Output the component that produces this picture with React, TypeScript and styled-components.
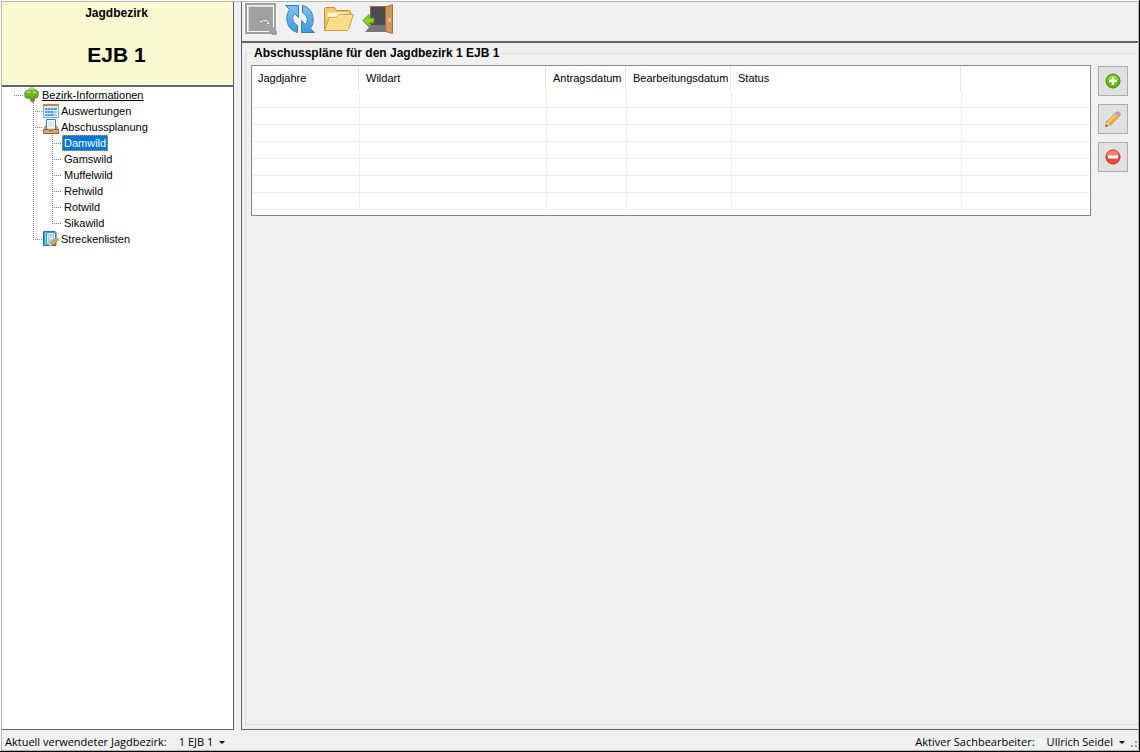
import React from "react";
import styled, { createGlobalStyle, css } from "styled-components";

const GlobalStyle = createGlobalStyle`
  *, *::before, *::after { box-sizing: border-box; }
  body { margin: 0; background: #fff; color: #000; font: 11px/16px "Liberation Sans", Arial, sans-serif; }
  button { font: inherit; color: inherit; border: 0; padding: 0; background: none; cursor: default; }
`;

const dotsAcross = "repeating-linear-gradient(90deg, #808080 0 1px, transparent 1px 2px)";
const dotsDown = "repeating-linear-gradient(180deg, #808080 0 1px, transparent 1px 2px)";

const Window = styled.div`
  display: flex;
  flex-direction: column;
  min-height: 100vh;
  padding: 1px 0 0 1px;
  background: #fff;
  border-right: 1px solid #000;
  border-bottom: 1px solid #000;
`;
const Frame = styled.div`
  flex: 1;
  display: flex;
  flex-direction: column;
  background: #f0f0f0;
  border: 1px solid #b4b4b4;
`;
const Body = styled.div`
  flex: 1;
  display: flex;
  gap: 7px;
`;
const Sidebar = styled.aside`
  flex: 0 0 232px;
  display: flex;
  flex-direction: column;
  background: #fff;
  border-right: 1px solid #646464;
  border-bottom: 1px solid #646464;
`;
const District = styled.header`
  height: 85px;
  padding: 3px 2px 0 0;
  background: #fafad2;
  border-bottom: 2px solid #646464;
  text-align: center;
  font-weight: bold;
`;
const DistrictLabel = styled.div`
  font-size: 12px;
`;
const DistrictName = styled.div`
  padding-top: 20px;
  font-size: 21px;
  line-height: 28px;
`;

const Tree = styled.ul`
  list-style: none;
  margin: 0;
  padding: 0 0 0 12px;
`;
const Branch = styled.ul`
  list-style: none;
  margin: 0 0 0 9px;
  padding: 0;
`;
const RootNode = styled.li`
  padding-left: 10px;
  background: ${dotsAcross} 0 8px / 10px 1px no-repeat;
`;
const Node = styled.li<{ $last?: boolean }>`
  padding-left: 10px;
  background:
    ${dotsDown} 0 0 / 1px ${(p) => (p.$last ? "9px" : "100%")} no-repeat,
    ${dotsAcross} 0 8px / 10px 1px no-repeat;
`;
const NodeRow = styled.div`
  display: flex;
  align-items: center;
  height: 16px;
`;
const NodeLabel = styled.button<{ $selected?: boolean; $underlined?: boolean }>`
  height: 16px;
  padding: 0 2px;
  line-height: 16px;
  white-space: nowrap;
  ${(p) => p.$underlined && css`text-decoration: underline;`}
  ${(p) =>
    p.$selected &&
    css`
      background: #0078d7;
      color: #fff;
      outline: 1px dotted #ff8728;
      outline-offset: -1px;
    `}
`;

const Main = styled.main`
  flex: 1;
  min-width: 0;
  display: flex;
  flex-direction: column;
  border-left: 1px solid #646464;
  border-bottom: 1px solid #646464;
`;
const Toolbar = styled.div`
  display: flex;
  gap: 7px;
  height: 41px;
  padding: 1px 3px 0;
  border-bottom: 2px solid #646464;
`;
const ToolButton = styled.button`
  width: 32px;
  height: 32px;
  svg {
    display: block;
    filter: drop-shadow(0 0 1px #fff);
  }
`;
const Content = styled.div`
  flex: 1;
  display: flex;
  padding: 2px 0 4px 3px;
`;
const Group = styled.fieldset`
  flex: 1;
  min-width: 0;
  margin: 0;
  padding: 4px 10px 0 5px;
  border: 1px solid #dcdcdc;
  border-right: 0;
`;
const GroupTitle = styled.legend`
  padding: 0 2px;
  margin-left: 1px;
  font-size: 12px;
  font-weight: bold;
`;
const GroupRow = styled.div`
  display: flex;
  align-items: flex-start;
  gap: 7px;
`;
const ListBox = styled.div`
  flex: 1;
  min-width: 0;
  height: 151px;
  overflow: hidden;
  background: #fff;
  border: 1px solid #828790;
`;
const List = styled.table`
  width: 100%;
  table-layout: fixed;
  border-collapse: separate;
  border-spacing: 0;
`;
const HeadCell = styled.th`
  height: 25px;
  padding: 0 1px 0 0;
  font-weight: normal;
  text-align: left;
  white-space: nowrap;
`;
const HeadText = styled.div<{ $open?: boolean }>`
  height: 25px;
  padding-left: 6px;
  line-height: 24px;
  border-right: 1px solid ${(p) => (p.$open ? "transparent" : "#e5e5e5")};
`;
const Cell = styled.td<{ $open?: boolean }>`
  height: 17px;
  padding: 0;
  border-bottom: 1px solid #f0f0f0;
  border-right: 1px solid ${(p) => (p.$open ? "transparent" : "#f0f0f0")};
`;
const Actions = styled.div`
  display: flex;
  flex-direction: column;
  gap: 8px;
  padding-top: 1px;
`;
const ActionButton = styled.button`
  display: grid;
  place-items: center;
  width: 30px;
  height: 30px;
  background: #e1e1e1;
  border: 1px solid #adadad;
`;

const StatusBar = styled.footer`
  display: flex;
  justify-content: space-between;
  height: 20px;
  padding: 2px 0 0 3px;
  font: 11px/20px "Open Sans", "Noto Sans", sans-serif;
`;
const StatusGroup = styled.div`
  display: flex;
  gap: 12px;
`;
const StatusMenu = styled.button`
  display: flex;
  align-items: center;
  gap: 6px;
  height: 20px;
`;
const Arrow = styled.span`
  border: 3px solid transparent;
  border-top-color: #000;
  border-bottom: 0;
`;
const Grip = styled.svg`
  align-self: flex-end;
  margin-left: -9px;
`;

const TreeIcon = () => (
  <svg width="16" height="16" viewBox="0 0 16 16" aria-hidden="true">
    <path d="M7 9h3l1 5-2 2-3-2z" fill="#a8743c" />
    <path d="M4 3.500C5 .500 10 0 11 3c3 0 4 3 3 4 1 3-1 5-4 4-2 2-4 1-5 0-3 1-5-1-4-3C0 5 2 3 4 3.500z" fill="#6cb829" stroke="#3f8a17" strokeWidth=".8" />
    <path d="M5 3c1-2 4-2 5 0M3 6c1-2 3-1 3 0M9 6c1-1 3-1 3 0" fill="none" stroke="#b5e36c" strokeWidth="1.300" />
    <path d="M4 9c1 1 2 1 3 0M9 10c1 0 3 0 3-2" fill="none" stroke="#418e18" />
  </svg>
);
const CalendarIcon = () => (
  <svg width="16" height="16" viewBox="0 0 16 16" aria-hidden="true">
    <path d="M.5 1.500h15v13H.5z" fill="#dff0ff" stroke="#6faee0" />
    <path d="M0 1h16v2H0z" fill="#de7750" />
    <path d="M2 5h12v2H2zM2 8h9v2H2zM2 11h9v2H2z" fill="#4a9be0" />
    <path d="M11 8h3v2h-3zM11 11h3v2h-3z" fill="#9ccdf6" />
    <path d="M4.500 5v8M7.500 5v8M10.500 5v8" stroke="#b9dcf8" strokeWidth=".6" />
  </svg>
);
const TrayIcon = () => (
  <svg width="16" height="16" viewBox="0 0 16 16" aria-hidden="true">
    <path d="M3.500.5h9V11h-9z" fill="#f5faff" stroke="#3d7fc0" />
    <path d="M5 3h6M5 5h6M5 7h6" stroke="#c4dcf2" />
    <path d="M1 10l1-3h1v3h10V7h1l1 3v4H1z" fill="#e4ba7d" stroke="#a87a42" strokeWidth=".6" />
    <path d="M.5 10.500H5l1 1h4l1-1h4.500v4H.5z" fill="#d8ab6c" stroke="#8a6034" />
  </svg>
);
const NotebookIcon = () => (
  <svg width="16" height="16" viewBox="0 0 16 16" aria-hidden="true">
    <path d="M.5.5H12l1 1v13H.5z" fill="#3a9be0" stroke="#2570b0" />
    <path d="M4.500 2.500h7v10h-7z" fill="#9fd2f7" stroke="#e4f4ff" />
    <path d="M6 5.500h4M6 7.500h4" stroke="#fff" />
    <path d="M2.500 1v13" stroke="#8acaf6" />
    <path d="M6 15l1-3 6-5 2.500 2L9 14z" fill="#f4a83a" stroke="#b6742b" strokeWidth=".7" />
    <path d="M12.500 7l1.500-1 2 2-1 1.500z" fill="#d693b7" />
    <path d="M6 15l1-3 2 2z" fill="#f5dfb9" />
  </svg>
);
const PreviewIcon = () => (
  <svg width="32" height="32" viewBox="0 0 32 32" aria-hidden="true">
    <path d="M1 1h29v29H1z" fill="#f7f7f7" stroke="#a0a0a0" strokeWidth="2" />
    <path d="M3 3h25v21l4 4v4h-5l-3-3H3z" fill="#a0a0a0" />
    <path d="M3.500 29V3.500H28" fill="none" stroke="#d8d8d8" />
    <path d="M15 18.500h2M18 17.500h4M22 18.500h1M23.500 19v2M22 20.500h1" stroke="#f4f4f4" />
    <path d="M2 28.500h22" stroke="#f7f7f7" />
  </svg>
);
const RefreshIcon = () => (
  <svg width="32" height="32" viewBox="0 0 32 32" aria-hidden="true">
    <defs>
      <linearGradient id="blue" x1="0" y1="0" x2="0" y2="1">
        <stop offset="0" stopColor="#7fc3ee" />
        <stop offset="1" stopColor="#3e9adc" />
      </linearGradient>
    </defs>
    <g fill="url(#blue)" stroke="#2f7fbd" strokeLinejoin="round">
      <path d="M1.500 2.500h13v12l-4-4c-3 4-2 9 3 12v7C3 27 0 15 5.500 6.500z" />
      <path d="M30.500 29.500h-13v-12l4 4c3-4 2-9-3-12v-7C29 5 32 17 26.500 25.500z" />
    </g>
  </svg>
);
const FolderIcon = () => (
  <svg width="32" height="32" viewBox="0 0 32 32" aria-hidden="true">
    <path d="M1.500 27V5.500l1-1h9l2 3h13l1 1V14L24 27z" fill="#f0c76c" stroke="#c68b2f" />
    <path d="M4.500 9.500h20V14h-20z" fill="#fff3cd" />
    <path d="M1.500 27.500l5-13h7l3-3H30.500l-5 15-1 1z" fill="#fbdc87" stroke="#d19a3e" strokeLinejoin="round" />
    <path d="M3.500 26l4-10.500H14l3-3h12" fill="none" stroke="#fff0b8" />
  </svg>
);
const ExitIcon = () => (
  <svg width="32" height="32" viewBox="0 0 32 32" aria-hidden="true">
    <path d="M8 3h18v25H8z" fill="#8a6a48" />
    <path d="M9 4h15v24H9z" fill="#4c4c50" />
    <path d="M9 22h15v7H3z" fill="#77777a" />
    <path d="M23.500 4l7-2.500v29l-7-2z" fill="#cf9660" stroke="#a66c35" />
    <path d="M27.500 15v4" stroke="#f7da85" strokeWidth="2" />
    <path d="M1 17.500l6-6V15h5v5H7v4z" fill="#8dd321" stroke="#4f910d" strokeLinejoin="round" />
  </svg>
);
const AddIcon = () => (
  <svg width="16" height="16" viewBox="0 0 16 16" aria-hidden="true">
    <circle cx="8" cy="8" r="7" fill="#62b900" stroke="#3f8612" />
    <path d="M2.500 7a5.500 5 0 0 1 11 0" fill="#8bd33c" />
    <path d="M8 4v8M4 8h8" stroke="#fff" strokeWidth="2.500" />
  </svg>
);
const PencilIcon = () => (
  <svg width="16" height="16" viewBox="0 0 16 16" aria-hidden="true">
    <path d="M.5 15.500l1.500-5 8.500-8.500 3.500 3.500-8.500 8.500z" fill="#f9ad38" stroke="#b87424" strokeWidth=".8" />
    <path d="M3 11.500l8-8" stroke="#ffda83" strokeWidth="1.500" />
    <path d="M.5 15.500l1.500-5 3.500 3.500z" fill="#f5ddb3" stroke="#b99363" strokeWidth=".6" />
    <path d="M.5 15.500l.6-2 1.400 1.400z" fill="#333" />
    <path d="M9.500 3l1.500-1.500L14.500 5 13 6.500z" fill="#b4b7bb" />
    <path d="M11 1.500c2-2 6 1 3.500 3.500z" fill="#d69cc3" stroke="#a36f94" strokeWidth=".6" />
  </svg>
);
const RemoveIcon = () => (
  <svg width="16" height="16" viewBox="0 0 16 16" aria-hidden="true">
    <circle cx="8" cy="8" r="7" fill="#ee4a34" stroke="#bd3022" />
    <path d="M2 7a6 5.500 0 0 1 12 0" fill="#f58271" />
    <path d="M3 6.500h10v3H3z" fill="#fff" />
  </svg>
);

const species = ["Damwild", "Gamswild", "Muffelwild", "Rehwild", "Rotwild", "Sikawild"];
const columns: { title: string; width?: number }[] = [
  { title: "Jagdjahre", width: 108 },
  { title: "Wildart", width: 187 },
  { title: "Antragsdatum", width: 80 },
  { title: "Bearbeitungsdatum", width: 105 },
  { title: "Status", width: 230 },
  { title: "" },
];
const rows = [0, 1, 2, 3, 4, 5, 6];
const tools = [
  { label: "Vorschau", icon: <PreviewIcon /> },
  { label: "Aktualisieren", icon: <RefreshIcon /> },
  { label: "Öffnen", icon: <FolderIcon /> },
  { label: "Beenden", icon: <ExitIcon /> },
];
const actions = [
  { label: "Hinzufügen", icon: <AddIcon /> },
  { label: "Bearbeiten", icon: <PencilIcon /> },
  { label: "Entfernen", icon: <RemoveIcon /> },
];

export default function App() {
  return (
    <Window>
      <GlobalStyle />
      <Frame>
        <Body>
          <Sidebar>
            <District>
              <DistrictLabel>Jagdbezirk</DistrictLabel>
              <DistrictName>EJB 1</DistrictName>
            </District>
            <Tree>
              <RootNode>
                <NodeRow><TreeIcon /><NodeLabel $underlined>Bezirk-Informationen</NodeLabel></NodeRow>
                <Branch>
                  <Node>
                    <NodeRow><CalendarIcon /><NodeLabel>Auswertungen</NodeLabel></NodeRow>
                  </Node>
                  <Node>
                    <NodeRow><TrayIcon /><NodeLabel>Abschussplanung</NodeLabel></NodeRow>
                    <Branch>
                      {species.map((name, i) => (
                        <Node key={name} $last={i === species.length - 1}>
                          <NodeRow><NodeLabel $selected={i === 0}>{name}</NodeLabel></NodeRow>
                        </Node>
                      ))}
                    </Branch>
                  </Node>
                  <Node $last>
                    <NodeRow><NotebookIcon /><NodeLabel>Streckenlisten</NodeLabel></NodeRow>
                  </Node>
                </Branch>
              </RootNode>
            </Tree>
          </Sidebar>
          <Main>
            <Toolbar>
              {tools.map((t) => (
                <ToolButton key={t.label} aria-label={t.label}>{t.icon}</ToolButton>
              ))}
            </Toolbar>
            <Content>
              <Group>
                <GroupTitle>Abschusspläne für den Jagdbezirk 1 EJB 1</GroupTitle>
                <GroupRow>
                  <ListBox>
                    <List>
                      <colgroup>
                        {columns.map((c) => <col key={c.title} width={c.width} />)}
                      </colgroup>
                      <thead>
                        <tr>
                          {columns.map((c) => (
                            <HeadCell key={c.title}><HeadText $open={!c.width}>{c.title}</HeadText></HeadCell>
                          ))}
                        </tr>
                      </thead>
                      <tbody>
                        {rows.map((r) => (
                          <tr key={r}>
                            {columns.map((c) => <Cell key={c.title} $open={!c.width} />)}
                          </tr>
                        ))}
                      </tbody>
                    </List>
                  </ListBox>
                  <Actions>
                    {actions.map((a) => (
                      <ActionButton key={a.label} aria-label={a.label}>{a.icon}</ActionButton>
                    ))}
                  </Actions>
                </GroupRow>
              </Group>
            </Content>
          </Main>
        </Body>
        <StatusBar>
          <StatusGroup>
            <span>Aktuell verwendeter Jagdbezirk:</span>
            <StatusMenu>1 EJB 1<Arrow /></StatusMenu>
          </StatusGroup>
          <StatusGroup>
            <span>Aktiver Sachbearbeiter:</span>
            <StatusMenu>Ullrich Seidel<Arrow /></StatusMenu>
            <Grip width="10" height="10" viewBox="0 0 10 10" aria-hidden="true">
              <path d="M7 1h2v2H7zM3 5h2v2H3zM7 5h2v2H7z" fill="#a0a0a0" />
            </Grip>
          </StatusGroup>
        </StatusBar>
      </Frame>
    </Window>
  );
}
